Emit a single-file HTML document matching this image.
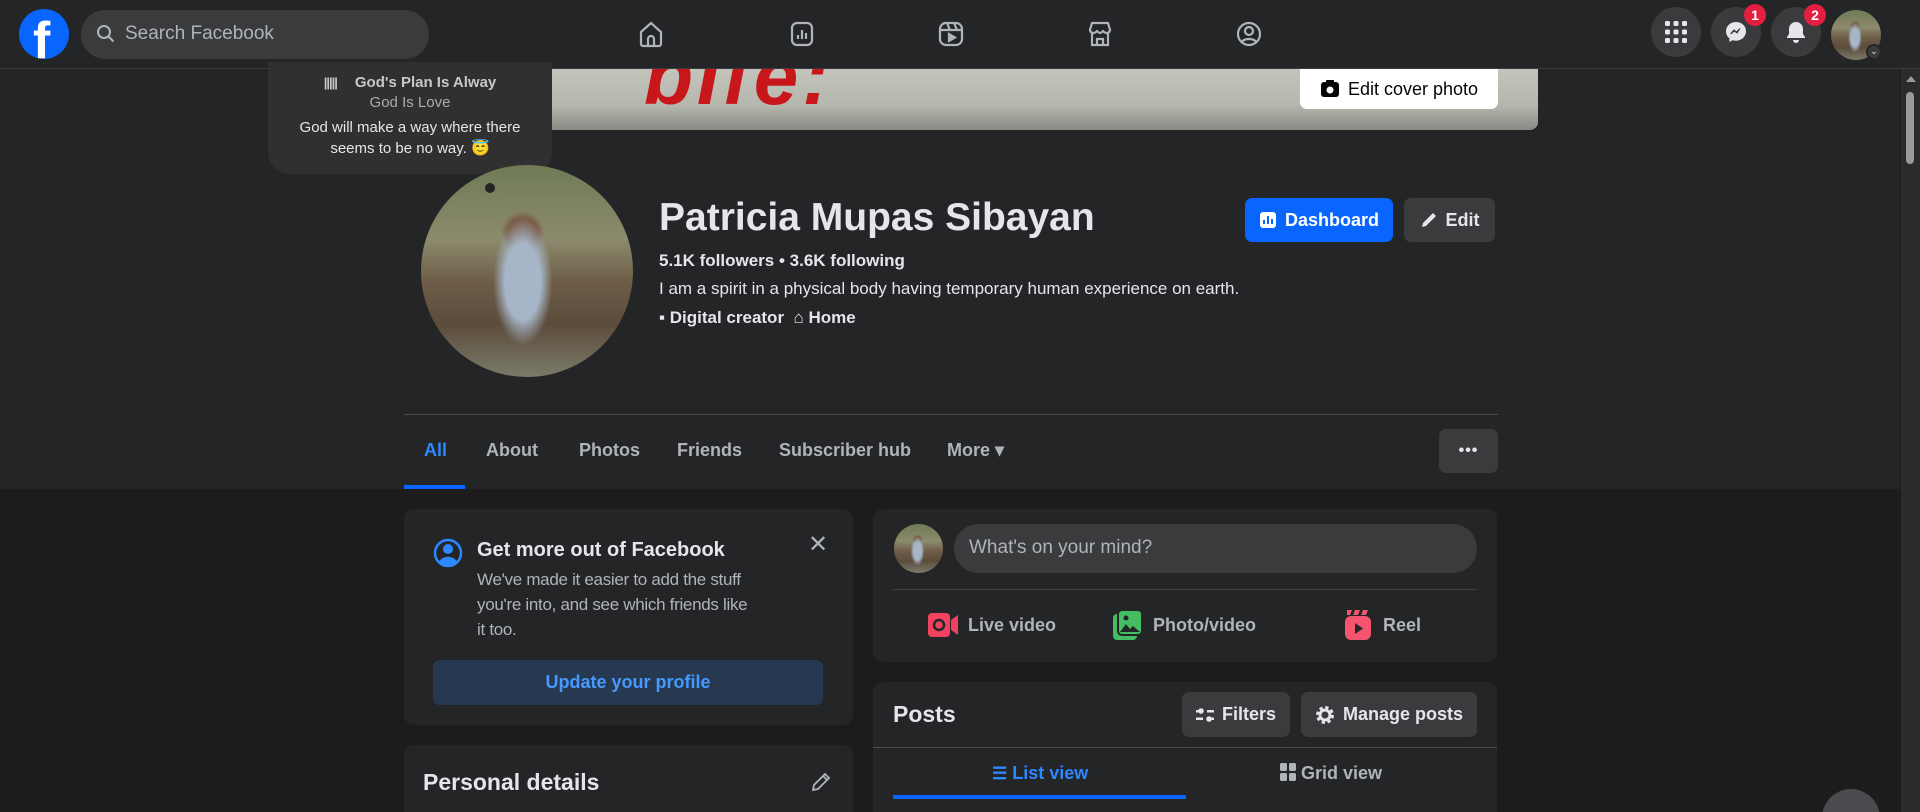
<!DOCTYPE html>
<html><head><meta charset="utf-8"><style>
*{box-sizing:border-box;margin:0;padding:0}
html,body{width:1920px;height:812px;overflow:hidden}
body{background:#1c1c1d;font-family:"Liberation Sans",sans-serif;color:#e4e6eb;position:relative}
.abs{position:absolute}
.top{left:0;top:0;width:1920px;height:69px;background:#242526;border-bottom:1px solid #3a3b3c}
.head{left:0;top:69px;width:1900px;height:420px;background:#242526}
.circ{border-radius:50%;background:#3a3b3c}
.btn{border-radius:7px;background:#3a3b3c;display:flex;align-items:center;justify-content:center;font-weight:bold;font-size:18px;color:#e4e6eb}
.card{background:#242526;border-radius:10px}
.tab{top:440px;font-size:18px;font-weight:bold;color:#b0b3b8}
.photo{background:radial-gradient(ellipse 14% 30% at 48% 55%,#a6b6c8 0 60%,transparent 100%),radial-gradient(circle at 48% 32%,#7a5a45 0 8%,transparent 12%),linear-gradient(180deg,#6f7a55 0%,#8c8b6d 35%,#6e5d48 55%,#5c4c3b 75%,#7a7a6a 100%)}
</style></head><body>
<div class="abs top"></div>
<div class="abs" style="left:19px;top:9px;width:50px;height:50px;border-radius:50%;background:#0866ff;overflow:hidden">
<div class="abs" style="left:14px;top:2px;font-size:52px;font-weight:bold;color:#fff;line-height:60px">f</div></div>
<div class="abs" style="left:81px;top:10px;width:348px;height:49px;border-radius:25px;background:#3a3b3c"></div>
<svg class="abs" style="left:96px;top:24px" width="20" height="20" viewBox="0 0 20 20"><circle cx="8" cy="8" r="6" fill="none" stroke="#b0b3b8" stroke-width="2"/><path d="M12.5 12.5l5 5" stroke="#b0b3b8" stroke-width="2"/></svg>
<div class="abs" style="left:125px;top:23px;font-size:19px;color:#b0b3b8">Search Facebook</div>
<svg class="abs" style="left:636px;top:19px" width="30" height="30" viewBox="0 0 30 30" fill="none" stroke="#b0b3b8" stroke-width="2.2"><path d="M5 13L15 4l10 9v12a2 2 0 0 1-2 2H7a2 2 0 0 1-2-2z"/><path d="M12 27v-7a3 3 0 0 1 6 0v7"/></svg>
<svg class="abs" style="left:787px;top:19px" width="30" height="30" viewBox="0 0 30 30" fill="none" stroke="#b0b3b8" stroke-width="2.2"><rect x="5" y="4" width="20" height="22" rx="5"/><path d="M11 20v-4M15 20v-9M19 20v-6"/></svg>
<svg class="abs" style="left:936px;top:19px" width="30" height="30" viewBox="0 0 30 30" fill="none" stroke="#b0b3b8" stroke-width="2.2"><rect x="4" y="4" width="22" height="22" rx="6"/><path d="M4 11h22M11 4l3 7M18 4l3 7"/><path d="M13 15v7l6-3.5z" fill="#b0b3b8"/></svg>
<svg class="abs" style="left:1085px;top:19px" width="30" height="30" viewBox="0 0 30 30" fill="none" stroke="#b0b3b8" stroke-width="2.2"><path d="M5 11l2-7h16l2 7c0 2-2 3-3.5 3S19 13 18 12c-1 1-2 2-3 2s-2-1-3-2c-1 1-2 2-3.5 2S5 13 5 11z"/><path d="M7 14v12h16V14M12 26v-6h6v6"/></svg>
<svg class="abs" style="left:1234px;top:19px" width="30" height="30" viewBox="0 0 30 30" fill="none" stroke="#b0b3b8" stroke-width="2.2"><circle cx="15" cy="15" r="11"/><circle cx="15" cy="12" r="4"/><path d="M8 23c2-4 12-4 14 0"/></svg>
<div class="abs circ" style="left:1651px;top:7px;width:50px;height:50px"></div>
<svg class="abs" style="left:1664px;top:20px" width="24" height="24" viewBox="0 0 24 24" fill="#e4e6eb"><rect x="1" y="1" width="5" height="5" rx="1.5"/><rect x="9.5" y="1" width="5" height="5" rx="1.5"/><rect x="18" y="1" width="5" height="5" rx="1.5"/><rect x="1" y="9.5" width="5" height="5" rx="1.5"/><rect x="9.5" y="9.5" width="5" height="5" rx="1.5"/><rect x="18" y="9.5" width="5" height="5" rx="1.5"/><rect x="1" y="18" width="5" height="5" rx="1.5"/><rect x="9.5" y="18" width="5" height="5" rx="1.5"/><rect x="18" y="18" width="5" height="5" rx="1.5"/></svg>
<div class="abs circ" style="left:1711px;top:7px;width:50px;height:50px"></div>
<svg class="abs" style="left:1724px;top:20px" width="24" height="24" viewBox="0 0 24 24"><path d="M12 2C6.4 2 2 6 2 11.3c0 2.9 1.3 5.4 3.4 7.1V22l3.2-1.8c1.1.3 2.2.5 3.4.5 5.6 0 10-4.1 10-9.4S17.6 2 12 2z" fill="#e4e6eb"/><path d="M6.5 14l3.5-4 2.5 2 3.5-3.5-3 4.5-2.5-2z" fill="#3a3b3c" stroke="#3a3b3c" stroke-width="1"/></svg>
<div class="abs circ" style="left:1771px;top:7px;width:50px;height:50px"></div>
<svg class="abs" style="left:1784px;top:20px" width="24" height="24" viewBox="0 0 24 24" fill="#e4e6eb"><path d="M12 2a7 7 0 0 0-7 7v5l-2 3v1h18v-1l-2-3V9a7 7 0 0 0-7-7z"/><path d="M9 20a3 3 0 0 0 6 0z"/></svg>
<div class="abs photo" style="left:1831px;top:10px;width:50px;height:50px;border-radius:50%"></div>
<div class="abs" style="left:1866px;top:44px;width:16px;height:16px;border-radius:50%;background:#3a3b3c;border:2px solid #242526;font-size:9px;text-align:center;line-height:11px;color:#e4e6eb">⌄</div>
<div class="abs" style="left:1744px;top:4px;width:22px;height:22px;border-radius:50%;background:#e41e3f;color:#fff;font-weight:bold;font-size:14px;text-align:center;line-height:22px">1</div>
<div class="abs" style="left:1804px;top:4px;width:22px;height:22px;border-radius:50%;background:#e41e3f;color:#fff;font-weight:bold;font-size:14px;text-align:center;line-height:22px">2</div>
<div class="abs" style="left:1901px;top:69px;width:19px;height:743px;background:#2b2b2c"></div>
<div class="abs" style="left:1906px;top:76px;width:0;height:0;border-left:5px solid transparent;border-right:5px solid transparent;border-bottom:6px solid #9a9a9a"></div>
<div class="abs" style="left:1906px;top:92px;width:8px;height:72px;border-radius:4px;background:#9a9a9a"></div>

<div class="abs head"></div>
<div class="abs" style="left:404px;top:69px;width:1134px;height:61px;border-radius:0 0 8px 8px;background:linear-gradient(180deg,#c3c4bb,#b5b6ad 60%,#8a8a85);overflow:hidden">
<div class="abs" style="left:240px;top:-38px;font-size:80px;font-weight:bold;color:#c8171a;font-style:italic;letter-spacing:4px">bIfe:</div></div>
<div class="abs" style="left:1300px;top:69px;width:198px;height:40px;border-radius:0 0 7px 7px;background:#fff;color:#050505;font-size:18px;display:flex;align-items:center;justify-content:center;gap:8px">
<svg width="20" height="18" viewBox="0 0 20 18"><rect x="1" y="2" width="18" height="15" rx="3" fill="#050505"/><rect x="6" y="0" width="8" height="4" rx="1" fill="#050505"/><circle cx="10" cy="10" r="3.5" fill="#fff"/></svg>Edit cover photo</div>
<div class="abs" style="left:268px;top:62px;width:284px;height:112px;border-radius:0 0 22px 22px;background:#303031;text-align:center">
<div style="margin-top:12px;font-size:15px;font-weight:bold;color:#c8c8c8"><span style="font-size:13px;margin-right:18px;letter-spacing:-1px">|||||</span>God's Plan Is Alway</div>
<div style="font-size:15px;color:#a8abaf;margin-top:3px">God Is Love</div>
<div style="font-size:15px;color:#e4e6eb;margin-top:6px;line-height:21px">God will make a way where there<br>seems to be no way. 😇</div></div>
<div class="abs photo" style="left:421px;top:165px;width:212px;height:212px;border-radius:50%"></div>
<div class="abs" style="left:485px;top:183px;width:10px;height:10px;border-radius:50%;background:#242526"></div>
<div class="abs" style="left:659px;top:196px;font-size:39px;font-weight:bold;color:#e4e6eb">Patricia Mupas Sibayan</div>
<div class="abs" style="left:659px;top:251px;font-size:17px;font-weight:bold">5.1K followers • 3.6K following</div>
<div class="abs" style="left:659px;top:279px;font-size:17px">I am a spirit in a physical body having temporary human experience on earth.</div>
<div class="abs" style="left:659px;top:308px;font-size:17px;font-weight:bold">▪ Digital creator &nbsp;⌂ Home</div>
<div class="abs btn" style="left:1245px;top:198px;width:148px;height:44px;background:#0866ff;color:#fff;gap:8px"><svg width="18" height="18" viewBox="0 0 18 18"><rect x="1" y="1" width="16" height="16" rx="3" fill="#fff"/><path d="M5 13V9M9 13V5M13 13V8" stroke="#0866ff" stroke-width="2"/></svg>Dashboard</div>
<div class="abs btn" style="left:1404px;top:198px;width:91px;height:44px;gap:8px"><svg width="18" height="18" viewBox="0 0 18 18"><path d="M2 16l1-4L13 2l3 3L6 15z" fill="#e4e6eb"/></svg>Edit</div>
<div class="abs" style="left:404px;top:414px;width:1094px;height:1px;background:#4a4b4d"></div>
<div class="abs tab" style="left:424px;color:#2d88ff">All</div>
<div class="abs" style="left:404px;top:485px;width:61px;height:4px;background:#0866ff"></div>
<div class="abs tab" style="left:486px">About</div>
<div class="abs tab" style="left:579px">Photos</div>
<div class="abs tab" style="left:677px">Friends</div>
<div class="abs tab" style="left:779px">Subscriber hub</div>
<div class="abs tab" style="left:947px">More ▾</div>
<div class="abs btn" style="left:1439px;top:429px;width:59px;height:44px;font-size:16px;letter-spacing:1px">•••</div>

<div class="abs card" style="left:404px;top:509px;width:449px;height:216px"></div>
<svg class="abs" style="left:433px;top:538px" width="30" height="30" viewBox="0 0 30 30"><circle cx="15" cy="15" r="13" fill="none" stroke="#2d88ff" stroke-width="2.5"/><circle cx="15" cy="11" r="5" fill="#2d88ff"/><path d="M6 24c3-7 15-7 18 0a13 13 0 0 1-18 0z" fill="#2d88ff"/></svg>
<div class="abs" style="left:477px;top:539px;font-size:20px;font-weight:bold">Get more out of Facebook</div>
<div class="abs" style="left:477px;top:567px;font-size:17px;color:#b0b3b8;line-height:25px;white-space:nowrap;letter-spacing:-0.3px">We've made it easier to add the stuff<br>you're into, and see which friends like<br>it too.</div>
<div class="abs" style="left:808px;top:530px;font-size:24px;color:#b0b3b8">✕</div>
<div class="abs" style="left:433px;top:660px;width:390px;height:45px;border-radius:7px;background:#263951;color:#4599ff;font-size:18px;font-weight:bold;display:flex;align-items:center;justify-content:center">Update your profile</div>
<div class="abs card" style="left:404px;top:745px;width:449px;height:67px;border-radius:10px 10px 0 0"></div>
<div class="abs" style="left:423px;top:769px;font-size:23px;font-weight:bold">Personal details</div>
<svg class="abs" style="left:810px;top:771px" width="22" height="22" viewBox="0 0 22 22" fill="none" stroke="#b0b3b8" stroke-width="1.8"><path d="M3 19l1-5L15 3l4 4L8 18z"/><path d="M13 5l4 4"/></svg>

<div class="abs card" style="left:873px;top:509px;width:624px;height:153px"></div>
<div class="abs photo" style="left:894px;top:524px;width:49px;height:49px;border-radius:50%"></div>
<div class="abs" style="left:954px;top:524px;width:523px;height:49px;border-radius:25px;background:#3a3b3c;font-size:19px;color:#b0b3b8;padding:13px 0 0 15px">What's on your mind?</div>
<div class="abs" style="left:893px;top:589px;width:584px;height:1px;background:#3e4042"></div>
<svg class="abs" style="left:928px;top:611px" width="30" height="28" viewBox="0 0 30 28"><rect x="0" y="2" width="22" height="24" rx="4" fill="#f3425f"/><circle cx="11" cy="14" r="5" fill="none" stroke="#242526" stroke-width="2.5"/><path d="M23 9l7-5v20l-7-5z" fill="#f3425f"/></svg>
<div class="abs" style="left:968px;top:615px;font-size:18px;font-weight:bold;color:#b0b3b8">Live video</div>
<svg class="abs" style="left:1113px;top:610px" width="30" height="30" viewBox="0 0 30 30"><rect x="0" y="4" width="24" height="26" rx="4" fill="#45bd62"/><rect x="5" y="0" width="24" height="25" rx="4" fill="#45bd62" stroke="#242526" stroke-width="2"/><circle cx="13" cy="8" r="2.5" fill="#242526"/><path d="M7 22l6-8 4 5 3-3 7 6z" fill="#242526"/></svg>
<div class="abs" style="left:1153px;top:615px;font-size:18px;font-weight:bold;color:#b0b3b8">Photo/video</div>
<svg class="abs" style="left:1344px;top:610px" width="28" height="30" viewBox="0 0 28 30"><rect x="1" y="6" width="26" height="24" rx="6" fill="#f5546f"/><path d="M3 0h5l-2 5H3zM11 0h5l-2 5h-5zM19 0h5l-2 5h-5z" fill="#f5546f"/><path d="M11 13v11l8-5.5z" fill="#242526"/></svg>
<div class="abs" style="left:1383px;top:615px;font-size:18px;font-weight:bold;color:#b0b3b8">Reel</div>

<div class="abs card" style="left:873px;top:682px;width:624px;height:130px;border-radius:10px 10px 0 0"></div>
<div class="abs" style="left:893px;top:701px;font-size:23px;font-weight:bold">Posts</div>
<div class="abs btn" style="left:1182px;top:692px;width:108px;height:45px;gap:8px"><svg width="18" height="16" viewBox="0 0 18 16" fill="#e4e6eb"><rect x="0" y="3" width="7" height="2.5"/><rect x="11" y="3" width="7" height="2.5"/><circle cx="5" cy="4" r="2.8"/><rect x="0" y="10.5" width="7" height="2.5"/><rect x="11" y="10.5" width="7" height="2.5"/><circle cx="13" cy="12" r="2.8"/></svg>Filters</div>
<div class="abs btn" style="left:1301px;top:692px;width:176px;height:45px;gap:8px"><svg width="20" height="20" viewBox="0 0 20 20"><circle cx="10" cy="10" r="7" fill="none" stroke="#e4e6eb" stroke-width="4" stroke-dasharray="3 2.5"/><circle cx="10" cy="10" r="5" fill="none" stroke="#e4e6eb" stroke-width="3"/></svg>Manage posts</div>
<div class="abs" style="left:873px;top:747px;width:624px;height:1px;background:#4a4b4d"></div>
<div class="abs" style="left:992px;top:763px;font-size:18px;font-weight:bold;color:#2d88ff"><span style="font-size:17px">☰</span> List view</div>
<div class="abs" style="left:893px;top:795px;width:293px;height:4px;background:#0866ff"></div>
<div class="abs" style="left:1280px;top:763px;font-size:18px;font-weight:bold;color:#b0b3b8"><svg width="16" height="18" viewBox="0 0 16 18" fill="#b0b3b8" style="vertical-align:-2px"><rect x="0" y="0" width="7" height="8" rx="1.5"/><rect x="9" y="0" width="7" height="8" rx="1.5"/><rect x="0" y="10" width="7" height="8" rx="1.5"/><rect x="9" y="10" width="7" height="8" rx="1.5"/></svg> Grid view</div>
<div class="abs" style="left:1822px;top:789px;width:58px;height:23px;overflow:hidden"><div style="width:58px;height:58px;border-radius:50%;background:#4a4b4e"></div></div>
</body></html>
